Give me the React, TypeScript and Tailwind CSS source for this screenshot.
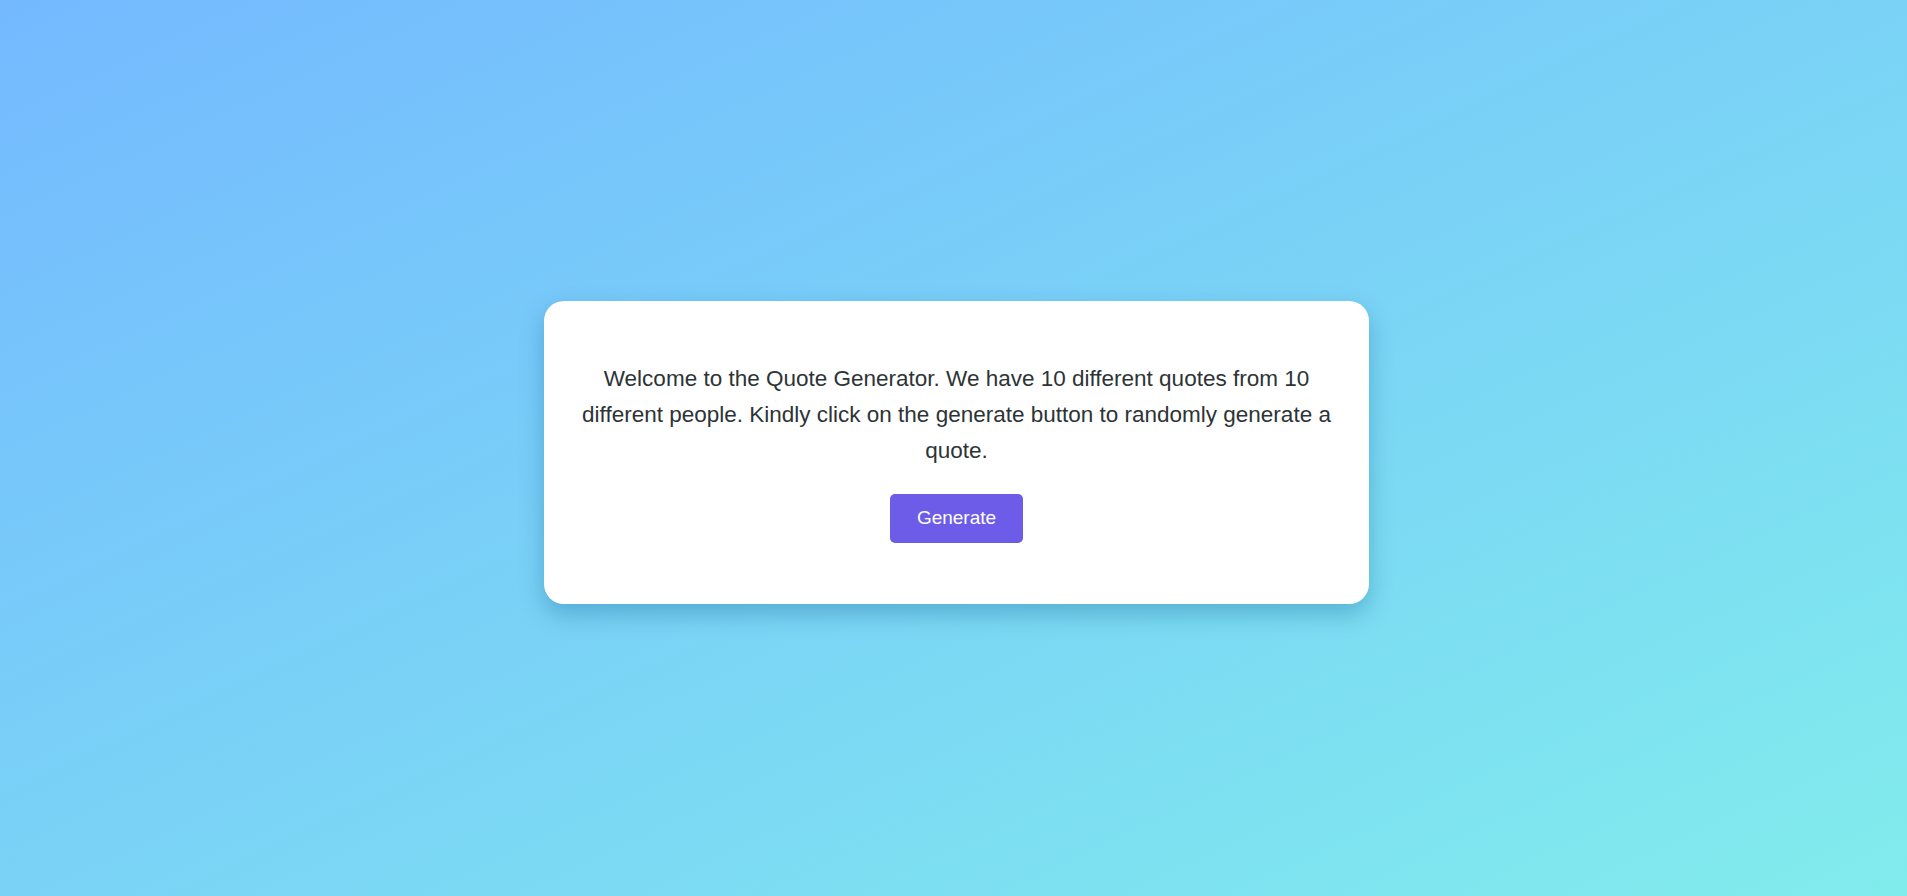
import { useState } from "react";

const quotes = [
  { text: "The only way to do great work is to love what you do.", author: "Steve Jobs" },
  { text: "Life is what happens when you're busy making other plans.", author: "John Lennon" },
  { text: "In the middle of difficulty lies opportunity.", author: "Albert Einstein" },
  { text: "Be yourself; everyone else is already taken.", author: "Oscar Wilde" },
  { text: "It always seems impossible until it's done.", author: "Nelson Mandela" },
  { text: "Whatever you are, be a good one.", author: "Abraham Lincoln" },
  { text: "Simplicity is the ultimate sophistication.", author: "Leonardo da Vinci" },
  { text: "The best way to predict the future is to invent it.", author: "Alan Kay" },
  { text: "Stay hungry, stay foolish.", author: "Stewart Brand" },
  { text: "Do what you can, with what you have, where you are.", author: "Theodore Roosevelt" },
];

const App = () => {
  const [quote, setQuote] = useState<{ text: string; author: string } | null>(null);

  const handleGenerate = () => {
    setQuote(quotes[Math.floor(Math.random() * quotes.length)]);
  };

  return (
    <div
      className="flex min-h-screen items-center justify-center bg-linear-to-br from-[#74b9ff] to-[#81ecec] pl-[6px] pt-[9px]"
      style={{ fontFamily: '"Liberation Sans", Arial, sans-serif' }}
    >
      <div className="w-[825px] rounded-[20px] bg-white px-[38px] pb-[61px] pt-[60px] text-center shadow-[0_10px_25px_rgba(0,80,130,0.3)]">
        <p className="text-[22.5px] leading-[36px] text-[#2d3436]">
          {quote
            ? `"${quote.text}"`
            : "Welcome to the Quote Generator. We have 10 different quotes from 10 different people. Kindly click on the generate button to randomly generate a quote."}
        </p>
        {quote && (
          <p className="mt-2 text-[18px] italic text-[#636e72]">- {quote.author}</p>
        )}
        <button
          onClick={handleGenerate}
          className="mt-[25px] h-[49px] w-[133px] rounded-[5px] bg-[#6c5ce7] text-[19px] text-white"
        >
          Generate
        </button>
      </div>
    </div>
  );
};

export default App;
